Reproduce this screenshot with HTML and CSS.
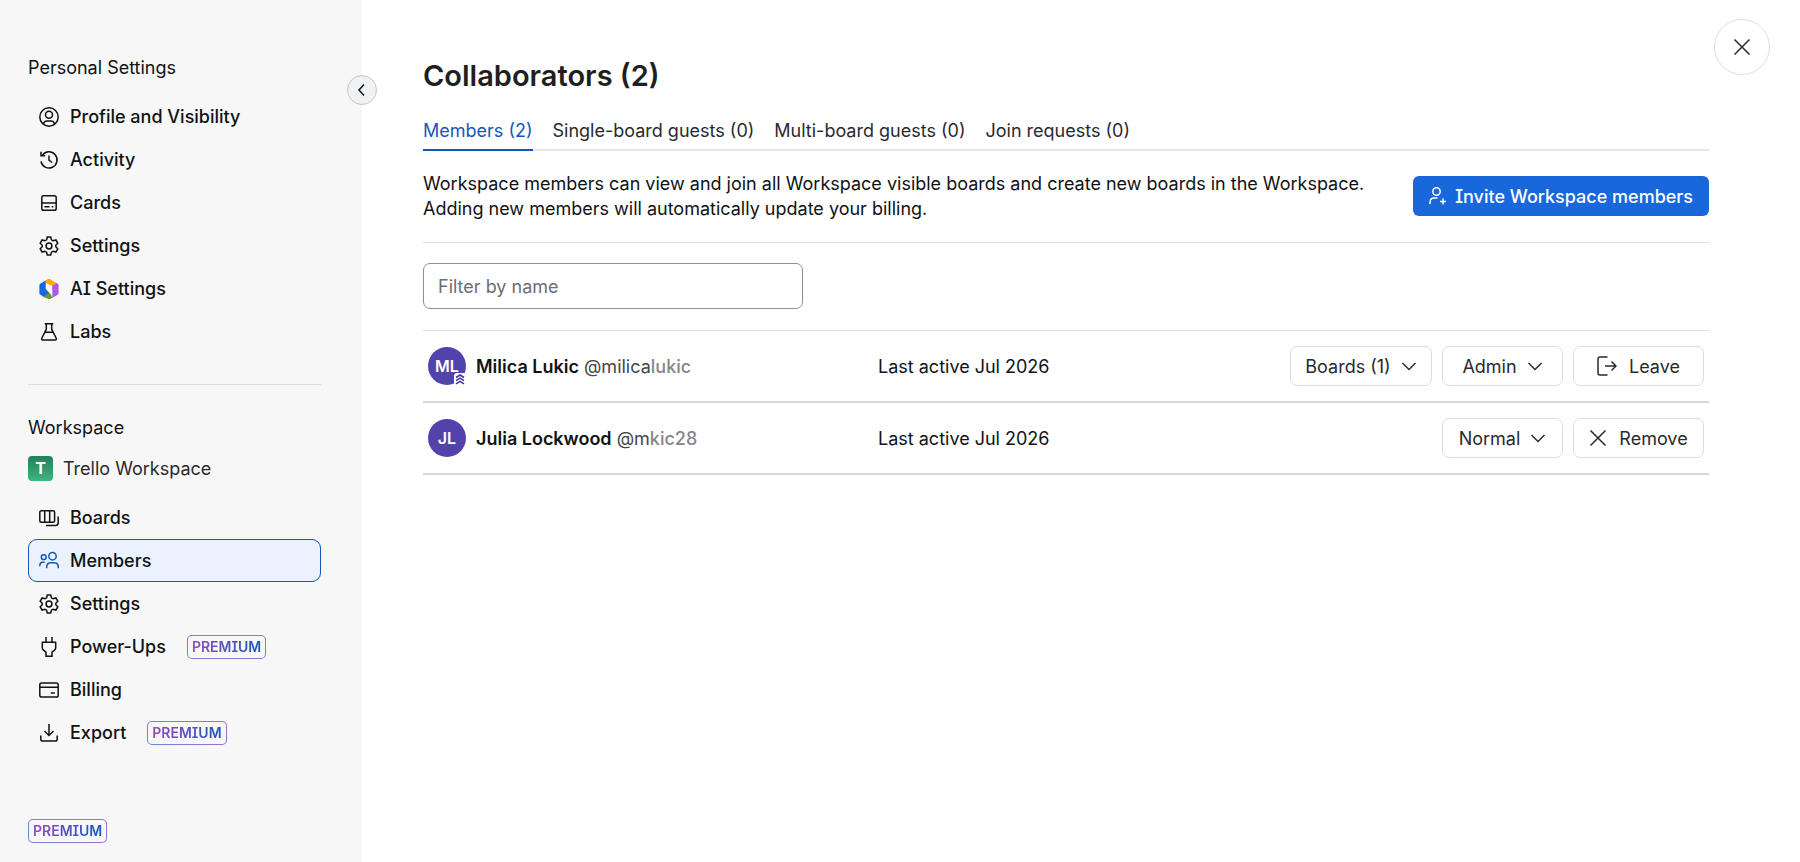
FILE: index.html
```html
<!DOCTYPE html>
<html lang="en">
<head>
    <meta charset="UTF-8">
    <meta name="viewport" content="width=device-width, initial-scale=1.0">
    <title>Trello Workspace - Members</title>
    <link rel="stylesheet" href="styles.css">
</head>
<body>
    <div class="layout">
        <aside class="sidebar">
            <button type="button" class="collapse-btn" aria-label="Collapse sidebar">
                <svg width="16" height="16" viewBox="0 0 16 16"><path d="M10 2.500 5 8l5 5.500"/></svg>
            </button>

            <h2 class="sidebar-title">Personal Settings</h2>
            <nav class="menu">
                <a href="#" class="menu-item">
                    <svg class="icon" viewBox="0 0 20 20"><circle cx="10" cy="10" r="9.200"/><circle cx="10" cy="7.800" r="3.500"/><path d="M4.500 17c.3-2 1.600-3 3.500-3h4c1.900 0 3.200 1 3.500 3"/></svg>
                    Profile and Visibility
                </a>
                <a href="#" class="menu-item">
                    <svg class="icon" viewBox="0 0 20 20"><path d="M3.300 5.300A8.100 8.100 0 1 1 2 11.300M2 1.800v4h4.200M10 5.500v4.700l3 2.300"/></svg>
                    Activity
                </a>
                <a href="#" class="menu-item">
                    <svg class="icon" viewBox="0 0 20 20"><rect x="2.800" y="2.800" width="14.400" height="14.400" rx="1.800"/><path d="M2.800 10h14.400M5.500 13.700h5M12.700 13.700h1.600"/></svg>
                    Cards
                </a>
                <a href="#" class="menu-item">
                    <svg class="icon" viewBox="0 0 20 20"><path d="M8.300 1h3.400l.7 2.800 1.700 1 2.800-.8 1.900 3.200-2 2v1.600l2 2-1.900 3.200-2.800-.8-1.700 1-.7 2.800H8.300l-.7-2.800-1.700-1-2.800.8-1.900-3.200 2-2V9.200l-2-2L3.100 4l2.800.8 1.700-1z"/><circle cx="10" cy="10" r="2.900"/></svg>
                    Settings
                </a>
                <a href="#" class="menu-item">
                    <svg class="icon icon-ai" viewBox="0 0 20 20">
                        <path fill="#1868db" d="M.4 6.200Q.4 5.100 1.400 4.500L6.800 1.500V9.500l3.200 3.300v3.300l-4 2.600-4.600-3Q.4 15 .4 13.900z"/>
                        <path fill="#fca700" d="M6.800 1.300 9.200 0q.8-.4 1.600 0l6.600 3.900-4.200 2.900L6.800 4z"/>
                        <path fill="#af59e1" d="M18.600 4.500q1 .6 1 1.700v7.700q0 1.100-1 1.800l-5.400 3.200V6.800l4.200-2.900z"/>
                        <path fill="#6a9a23" d="m4.500 17.600 6-3.800 2.700 1.700v3.300L10.900 20q-.9.400-1.700 0z"/>
                        <path fill="#fff" d="m6.800 6.500 6.400 3.700v8.200l-1.200-2.800-5.200-5.700z"/>
                    </svg>
                    AI Settings
                </a>
                <a href="#" class="menu-item">
                    <svg class="icon" viewBox="0 0 20 20"><path d="M5.700 1.700h8.600M7.300 1.700v5.500L2.900 16q-.9 2 1 2h12.200q1.900 0 1-2l-4.400-8.800V1.700M5.800 10.200h8.400"/></svg>
                    Labs
                </a>
            </nav>

            <hr class="divider">

            <h2 class="sidebar-title">Workspace</h2>
            <div class="workspace">
                <span class="workspace-logo">T</span>
                <span>Trello Workspace</span>
            </div>
            <nav class="menu">
                <a href="#" class="menu-item">
                    <svg class="icon" viewBox="0 0 20 20"><rect x=".8" y="2.800" width="14.800" height="11.400" rx="1.500"/><path d="M5.700 2.800v11.400M10.700 2.800v11.400M19.200 8.500v6.200q0 2.800-2.800 2.800H7"/></svg>
                    Boards
                </a>
                <a href="#" class="menu-item active">
                    <svg class="icon" viewBox="0 0 20 20"><circle cx="13.500" cy="5.200" r="3.700"/><circle cx="4.700" cy="6.200" r="2.400"/><path d="M7.700 17.300v-1.200q0-4.300 4.300-4.300h3q4.300 0 4.300 4.300v1.200M.8 15.300v-.8q0-3.200 3-3.200h1.800"/></svg>
                    Members
                </a>
                <a href="#" class="menu-item">
                    <svg class="icon" viewBox="0 0 20 20"><path d="M8.300 1h3.400l.7 2.800 1.700 1 2.800-.8 1.900 3.200-2 2v1.600l2 2-1.900 3.200-2.800-.8-1.700 1-.7 2.800H8.300l-.7-2.800-1.700-1-2.800.8-1.900-3.200 2-2V9.200l-2-2L3.100 4l2.800.8 1.700-1z"/><circle cx="10" cy="10" r="2.900"/></svg>
                    Settings
                </a>
                <a href="#" class="menu-item">
                    <svg class="icon" viewBox="0 0 20 20"><path d="M2.800 5.300h14.400M7 0v5.300M13 0v5.300M3.300 5.300v5.500q0 1.500 1.200 2.400l2.500 2v4h6v-4l2.500-2q1.200-.9 1.200-2.400V5.300"/></svg>
                    Power-Ups
                    <span class="badge"><span>PREMIUM</span></span>
                </a>
                <a href="#" class="menu-item">
                    <svg class="icon" viewBox="0 0 20 20"><rect x=".8" y="3" width="18.400" height="14" rx="1.800"/><path d="M.8 7.300h18.400M11.800 13h4"/></svg>
                    Billing
                </a>
                <a href="#" class="menu-item">
                    <svg class="icon" viewBox="0 0 20 20"><path d="M10 1v11.500M5.500 8l4.500 4.500L14.500 8M1.800 12.500v3.700q0 1.800 1.800 1.800h12.800q1.800 0 1.800-1.800v-3.700"/></svg>
                    Export
                    <span class="badge"><span>PREMIUM</span></span>
                </a>
            </nav>
            <div class="plan"><span class="badge"><span>PREMIUM</span></span></div>
        </aside>

        <main class="content">
            <button type="button" class="close-btn" aria-label="Close">
                <svg width="18" height="18" viewBox="0 0 18 18"><path d="m1.500 1.500 15 15M16.500 1.500l-15 15"/></svg>
            </button>

            <h1>Collaborators (2)</h1>
            <nav class="tabs">
                <a href="#" class="tab active">Members (2)</a>
                <a href="#" class="tab">Single-board guests (0)</a>
                <a href="#" class="tab">Multi-board guests (0)</a>
                <a href="#" class="tab">Join requests (0)</a>
            </nav>

            <section class="intro">
                <p>Workspace members can view and join all Workspace visible boards and create new boards in the Workspace. Adding new members will automatically update your billing.</p>
                <button type="button" class="invite-btn">
                    <svg width="18" height="18" viewBox="0 0 18 18"><circle cx="7.500" cy="4.500" r="3.700"/><path d="M1 17v-1.500q0-4.500 4.300-4.500h3.200M14 11.500v6M11 14.500h6"/></svg>
                    Invite Workspace members
                </button>
            </section>

            <div class="filter">
                <input type="text" placeholder="Filter by name" aria-label="Filter by name">
            </div>

            <ul class="members">
                <li class="member">
                    <span class="avatar">ML
                        <svg class="admin-mark" viewBox="0 0 12 12"><path d="m2 4.500 4-2.500 4 2.500M2 7.700l4-2.500 4 2.500M2 10.900l4-2.500 4 2.500"/></svg>
                    </span>
                    <div class="member-name"><strong>Milica Lukic</strong> <span class="handle">@milica<b>lukic</b></span></div>
                    <div class="last-active">Last active Jul 2026</div>
                    <div class="actions">
                        <button type="button" class="btn btn-boards">Boards (1)
                            <svg width="16" height="16" viewBox="0 0 16 16"><path d="m1.500 5 6.500 6.500L14.500 5"/></svg>
                        </button>
                        <label class="btn btn-role">
                            <select aria-label="Role of Milica Lukic"><option>Admin</option><option>Normal</option></select>
                            <svg width="16" height="16" viewBox="0 0 16 16"><path d="m1.500 5 6.500 6.500L14.500 5"/></svg>
                        </label>
                        <button type="button" class="btn btn-leave">
                            <svg width="20" height="20" viewBox="0 0 20 20"><path d="M10.500 1H3Q1 1 1 3v14q0 2 2 2h7.500M8 10h11M14.500 5.500 19 10l-4.500 4.500"/></svg>
                            Leave
                        </button>
                    </div>
                </li>
                <li class="member">
                    <span class="avatar">JL</span>
                    <div class="member-name"><strong>Julia Lockwood</strong> <span class="handle">@m<b>kic28</b></span></div>
                    <div class="last-active">Last active Jul 2026</div>
                    <div class="actions">
                        <label class="btn btn-role">
                            <select aria-label="Role of Julia Lockwood"><option>Normal</option><option>Admin</option></select>
                            <svg width="16" height="16" viewBox="0 0 16 16"><path d="m1.500 5 6.500 6.500L14.500 5"/></svg>
                        </label>
                        <button type="button" class="btn btn-leave">
                            <svg width="18" height="18" viewBox="0 0 18 18"><path d="m1.500 1.500 15 15M16.500 1.500l-15 15"/></svg>
                            Remove
                        </button>
                    </div>
                </li>
            </ul>
        </main>
    </div>
</body>
</html>
```
FILE: styles.css
```css
* {
    box-sizing: border-box;
}
body {
    margin: 0;
    font-family: Inter, "Liberation Sans", sans-serif;
    font-size: 18px;
    line-height: 25px;
    color: #101214;
    background-color: #fff;
    /* capital I with serifs */
    font-feature-settings: "cv08";
}
button, input, select {
    font: inherit;
    font-feature-settings: inherit;
    color: inherit;
}
button {
    cursor: pointer;
}
svg {
    flex: none;
    fill: none;
    stroke: currentColor;
    stroke-width: 1.5;
}
.layout {
    display: flex;
    min-height: 100vh;
}

/* Sidebar */
.sidebar {
    position: relative;
    flex: none;
    width: 362px;
    padding: 55px 41px 19px 28px;
    background-color: #f7f7f7;
}
.collapse-btn {
    position: absolute;
    top: 75px;
    right: -15px;
    display: flex;
    align-items: center;
    justify-content: center;
    width: 30px;
    height: 30px;
    padding: 0;
    border: 1px solid #c4c6ca;
    border-radius: 50%;
    background-color: #f0f1f2;
}
.sidebar-title {
    margin: 0;
    font-size: 18px;
    font-weight: 400;
}
.menu {
    margin-top: 15px;
}
.menu-item {
    display: flex;
    align-items: center;
    gap: 11px;
    height: 43px;
    padding: 0 10px;
    border: 1px solid transparent;
    border-radius: 9px;
    color: #101214;
    font-weight: 550;
    text-decoration: none;
}
.menu-item.active {
    border-color: #1558bc;
    background-color: #e9f2fe;
}
.menu-item.active .icon {
    color: #1558bc;
}
.icon {
    width: 20px;
    height: 20px;
}
.icon-ai {
    stroke: none;
}
.divider {
    height: 1px;
    margin: 31px 0 30px;
    border: none;
    background-color: #dddee1;
}
.workspace {
    display: flex;
    align-items: center;
    gap: 10px;
    margin-top: 16px;
    color: #292a2e;
}
.workspace-logo {
    width: 25px;
    height: 25px;
    border-radius: 4px;
    background: linear-gradient(#22805a, #3fb57f);
    color: #fff;
    font-size: 16px;
    font-weight: 700;
    text-align: center;
}
.badge {
    margin-left: 10px;
    padding: 0 4px;
    border: 1px solid transparent;
    border-radius: 5px;
    background: linear-gradient(#f7f7f7, #f7f7f7) padding-box, linear-gradient(90deg, #6d86dd, #a06cc8) border-box;
    font-size: 14px;
    font-weight: 600;
    line-height: 22px;
}
.badge span {
    background: linear-gradient(90deg, #964ac0, #1558bc);
    background-clip: text;
    color: transparent;
}
.plan {
    display: flex;
    margin-top: 65px;
}
.plan .badge {
    margin-left: 0;
}

/* Content */
.content {
    position: relative;
    flex: 1;
    padding: 57px 91px 40px 61px;
}
.close-btn {
    position: absolute;
    top: 19px;
    right: 30px;
    display: flex;
    align-items: center;
    justify-content: center;
    width: 56px;
    height: 56px;
    padding: 0;
    border: 1px solid #dddee1;
    border-radius: 50%;
    background-color: #fff;
    color: #292a2e;
}
h1 {
    margin: 0;
    font-size: 29px;
    font-weight: 600;
    line-height: 38px;
    color: #1e1f21;
}
.tabs {
    display: flex;
    gap: 20px;
    margin-top: 23px;
    border-bottom: 2px solid #e6e7e9;
}
.tab {
    margin-bottom: -2px;
    padding-bottom: 6px;
    border-bottom: 2px solid transparent;
    color: #292a2e;
    text-decoration: none;
}
.tab.active {
    border-color: #1558bc;
    color: #1558bc;
}
.intro {
    display: flex;
    align-items: center;
    justify-content: space-between;
    gap: 40px;
    padding: 20px 0 21px;
    border-bottom: 1px solid #dddee1;
}
.intro p {
    margin: 0;
}
.invite-btn {
    display: flex;
    flex: none;
    align-items: center;
    gap: 8px;
    height: 40px;
    padding: 0 16px;
    border: none;
    border-radius: 6px;
    background-color: #1868db;
    color: #fff;
    font-weight: 550;
}
.filter {
    padding: 20px 0 21px;
    border-bottom: 1px solid #dddee1;
}
.filter input {
    display: block;
    width: 380px;
    height: 46px;
    padding: 0 14px;
    border: 1px solid #8c8f97;
    border-radius: 7px;
}
.filter input::placeholder {
    color: #6b6e76;
    opacity: 1;
}

/* Members list */
.members {
    margin: 0;
    padding: 0;
    list-style: none;
}
.member {
    display: flex;
    align-items: center;
    height: 72px;
    padding: 0 5px;
    border-bottom: 2px solid #d5d6d9;
}
.avatar {
    position: relative;
    width: 38px;
    height: 38px;
    margin-right: 10px;
    border-radius: 50%;
    background-color: #5243aa;
    color: #fff;
    font-size: 16px;
    font-weight: 600;
    line-height: 38px;
    text-align: center;
}
.admin-mark {
    position: absolute;
    right: 0;
    bottom: 0;
    width: 12px;
    height: 12px;
    border-radius: 3px;
    background-color: #fff;
    color: #403294;
}
.member-name {
    width: 402px;
}
.member-name strong {
    font-weight: 600;
}
.handle {
    color: #44464b;
}
.handle b {
    color: #85868a;
    font-weight: 500;
}
.last-active {
    flex: 1;
}
.actions {
    display: flex;
    gap: 10px;
}
.btn {
    display: flex;
    align-items: center;
    justify-content: center;
    gap: 10px;
    height: 40px;
    padding: 0;
    border: 1px solid #dddee1;
    border-radius: 7px;
    background-color: #fff;
    color: #292a2e;
}
.btn-boards {
    width: 142px;
}
.btn-role {
    width: 121px;
}
.btn-role select {
    appearance: none;
    field-sizing: content;
    padding: 0;
    border: none;
    background: none;
}
.btn-leave {
    gap: 12px;
    width: 131px;
}
```
